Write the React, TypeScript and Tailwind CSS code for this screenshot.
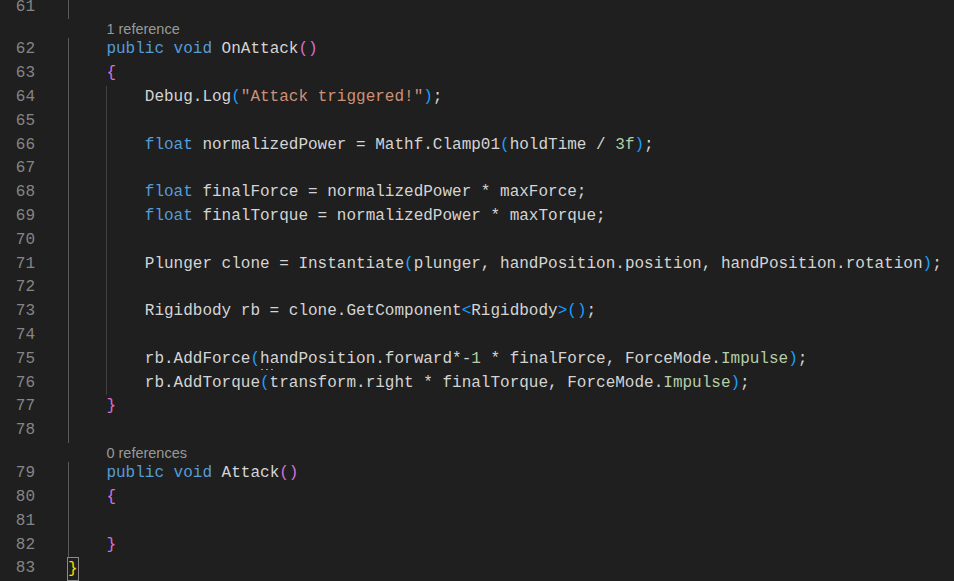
import React from 'react';

type Kind = 'txt' | 'kw' | 'str' | 'num' | 'b1' | 'b2' | 'b3' | 'hint';
type Tok = [string, Kind?];

interface Line {
  n?: number;
  lens?: string;
  guides: number;
  toks?: Tok[];
  matched?: boolean;
}

const color: Record<Kind, string> = {
  txt: 'text-[#d4d4d4]',
  kw: 'text-[#569cd6]',
  str: 'text-[#ce9178]',
  num: 'text-[#b5cea8]',
  b1: 'text-[#ffd700]',
  b2: 'text-[#da70d6]',
  b3: 'text-[#179fff]',
  hint: 'text-[#d4d4d4]',
};

const lines: Line[] = [
  { n: 61, guides: 1 },
  { lens: '1 reference', guides: 0 },
  { n: 62, guides: 1, toks: [['public', 'kw'], [' '], ['void', 'kw'], [' OnAttack'], ['()', 'b2']] },
  { n: 63, guides: 1, toks: [['{', 'b2']] },
  { n: 64, guides: 2, toks: [['Debug.Log'], ['(', 'b3'], ['"Attack triggered!"', 'str'], [')', 'b3'], [';']] },
  { n: 65, guides: 2 },
  {
    n: 66,
    guides: 2,
    toks: [['float', 'kw'], [' normalizedPower = Mathf.Clamp01'], ['(', 'b3'], ['holdTime / '], ['3f', 'num'], [')', 'b3'], [';']],
  },
  { n: 67, guides: 2 },
  { n: 68, guides: 2, toks: [['float', 'kw'], [' finalForce = normalizedPower * maxForce;']] },
  { n: 69, guides: 2, toks: [['float', 'kw'], [' finalTorque = normalizedPower * maxTorque;']] },
  { n: 70, guides: 2 },
  {
    n: 71,
    guides: 2,
    toks: [['Plunger clone = Instantiate'], ['(', 'b3'], ['plunger, handPosition.position, handPosition.rotation'], [')', 'b3'], [';']],
  },
  { n: 72, guides: 2 },
  {
    n: 73,
    guides: 2,
    toks: [['Rigidbody rb = clone.GetComponent'], ['<', 'b3'], ['Rigidbody'], ['>', 'b3'], ['()', 'b3'], [';']],
  },
  { n: 74, guides: 2 },
  {
    n: 75,
    guides: 2,
    toks: [
      ['rb.AddForce'], ['(', 'b3'], ['h', 'hint'], ['andPosition.forward*-'], ['1', 'num'],
      [' * finalForce, ForceMode.'], ['Impulse', 'num'], [')', 'b3'], [';'],
    ],
  },
  {
    n: 76,
    guides: 2,
    toks: [['rb.AddTorque'], ['(', 'b3'], ['transform.right * finalTorque, ForceMode.'], ['Impulse', 'num'], [')', 'b3'], [';']],
  },
  { n: 77, guides: 1, toks: [['}', 'b2']] },
  { n: 78, guides: 1 },
  { lens: '0 references', guides: 0 },
  { n: 79, guides: 1, toks: [['public', 'kw'], [' '], ['void', 'kw'], [' Attack'], ['()', 'b2']] },
  { n: 80, guides: 1, toks: [['{', 'b2']] },
  { n: 81, guides: 1 },
  { n: 82, guides: 1, toks: [['}', 'b2']] },
  { n: 83, guides: 0, toks: [['}', 'b1']], matched: true },
];

// indent guides: outer one a bit brighter than the nested one
function GuideCells({ count }: { count: number }) {
  return (
    <>
      {Array.from({ length: count }).map((_, i) => (
        <span
          key={i}
          className={
            i === 0
              ? 'w-[38.4px] shrink-0 h-full border-l border-[#5a5a5a]'
              : 'w-[38.4px] shrink-0 h-full border-l border-[#404040]'
          }
        />
      ))}
    </>
  );
}

function Token({ tok, matched }: { tok: Tok; matched?: boolean }) {
  const kind = tok[1] ?? 'txt';
  if (kind === 'hint') {
    return (
      <span className={`relative ${color.txt}`}>
        {tok[0]}
        <span className="absolute left-[1px] bottom-[2px] flex gap-[3px]">
          <span className="w-[2px] h-[1px] bg-[#9a9a9a]" />
          <span className="w-[2px] h-[1px] bg-[#9a9a9a]" />
          <span className="w-[2px] h-[1px] bg-[#9a9a9a]" />
        </span>
      </span>
    );
  }
  if (matched) {
    return (
      <span className={`inline-block h-[22px] leading-[22px] outline outline-1 outline-[#8a8a8a] ${color[kind]}`}>
        {tok[0]}
      </span>
    );
  }
  return <span className={color[kind]}>{tok[0]}</span>;
}

export default function App() {
  return (
    <div className="w-[954px] h-[581px] overflow-hidden bg-[#1f1f1f] font-['Liberation_Mono',monospace] text-[16px]">
      <div className="-mt-[4.5px]">
        {lines.map((line, idx) =>
          line.lens ? (
            <div key={idx} className="flex h-[19.15px]">
              <div className="w-[68px] shrink-0" />
              <span className="w-[38.4px] shrink-0" />
              <span className="pt-[1px] leading-[19px] text-[14.5px] text-[#999999] font-['Liberation_Sans',sans-serif]">
                {line.lens}
              </span>
            </div>
          ) : (
            <div key={idx} className="flex h-[23.8px] leading-[23.8px]">
              <div className="w-[68px] shrink-0 flex">
                <span className="w-[35px] text-right text-[#858585]">{line.n}</span>
              </div>
              <div className="flex h-full items-stretch">
                <GuideCells count={line.guides} />
                {line.toks && (
                  <span className="whitespace-pre flex items-center">
                    {line.toks.map((t, i) => (
                      <Token key={i} tok={t} matched={line.matched} />
                    ))}
                  </span>
                )}
              </div>
            </div>
          )
        )}
      </div>
    </div>
  );
}
